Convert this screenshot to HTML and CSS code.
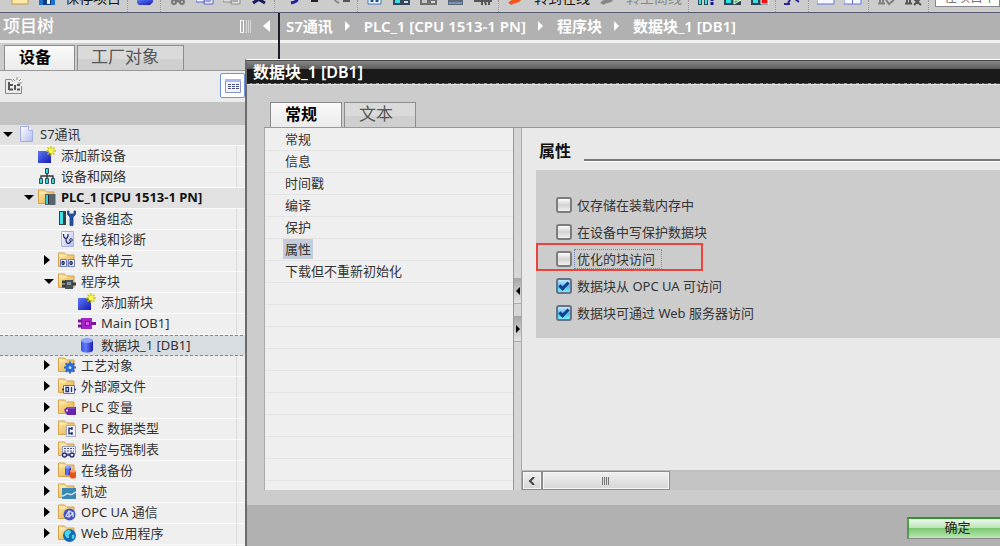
FILE: index.html
```html
<!DOCTYPE html>
<html lang="zh-CN">
<head>
  <meta charset="UTF-8">
  <meta name="viewport" content="width=device-width, initial-scale=1.0">
  <title>数据块_1 [DB1]</title>
  <link rel="stylesheet" href="styles.css">
</head>
<body>
  <!-- Shared icons -->
  <svg class="sprite" aria-hidden="true">
    <defs>
      <linearGradient id="gold" x1="0" y1="0" x2="1" y2="1"><stop offset="0" stop-color="#ffe9a6"/><stop offset="1" stop-color="#e3ad45"/></linearGradient>
      <linearGradient id="blue" x1="0" y1="0" x2="1" y2="1"><stop offset="0" stop-color="#5b7bf5"/><stop offset="1" stop-color="#1717b4"/></linearGradient>
      <linearGradient id="cyl" x1="0" y1="0" x2="1" y2="0"><stop offset="0" stop-color="#3f52e0"/><stop offset=".4" stop-color="#5f7cf8"/><stop offset="1" stop-color="#1c1cb0"/></linearGradient>
      <linearGradient id="page" x1="0" y1="0" x2="1" y2="1"><stop offset="0" stop-color="#fff"/><stop offset="1" stop-color="#b3bdf0"/></linearGradient>
    </defs>
    <symbol id="folder" viewBox="0 0 18 18"><path d="M.5 15.5V2h6l2 2H16v11.5z" fill="url(#gold)" stroke="#d3a24a"/><path d="M1.500 5h5l2-1" fill="none" stroke="#fff2c8"/></symbol>
    <symbol id="star" viewBox="0 0 10 10"><path d="M5 0v10M0 5h10M1.500 1.500l7 7M8.500 1.500l-7 7" stroke="#c9c800" stroke-width="1.400"/><circle cx="5" cy="5" r="2.300" fill="#ffff4a"/></symbol>
    <symbol id="file" viewBox="0 0 18 18"><path d="M3.500 1.500h8l4 4v11h-12z" fill="url(#page)" stroke="#a3ade0"/><path d="M11.500 1.500v4h4" fill="#fff" stroke="#a3ade0"/></symbol>
    <symbol id="add" viewBox="0 0 18 18"><path d="M0 5h13v12H0z" fill="url(#blue)"/><use href="#star" x="8" y="0" width="10" height="10"/></symbol>
    <symbol id="network" viewBox="0 0 18 18"><path d="M9 6v4M3 12v-3h12v3M9 9v3" fill="none" stroke="#333" stroke-width="1.400"/><g fill="#35d5df" stroke="#2d4e5d"><path d="M7.500 1.500h3v5h-3zM1.500 11.500h3v5h-3zM7.500 11.500h3v5h-3zM13.500 11.500h3v5h-3z"/></g></symbol>
    <symbol id="plc" viewBox="0 0 18 18"><use href="#folder"/><path d="M7 6h10.500v11H7z" fill="#56626c"/><path d="M8 7h2v9H8z" fill="#35d0dc"/><path d="M10.500 7v9" stroke="#202a33"/></symbol>
    <symbol id="config" viewBox="0 0 18 18"><path d="M1 2h7v14H1z" fill="#33414c"/><path d="M2 3h3v12H2z" fill="#3ce0e6"/><path d="M9.500 2v3.500L12 8v8.500h3V8l2.500-2.500V2h-1.500v3h-5V2z" fill="#24519f" stroke="#1c3f85" stroke-width=".8"/></symbol>
    <symbol id="diag" viewBox="0 0 18 18"><path d="M3.500 1.500h12v15h-12z" fill="url(#page)" stroke="#a9b1da"/><path d="M5.500 4c0 6 5 6 4.500 0M8 9c0 6 4 5 4.500 2" fill="none" stroke="#222b66" stroke-width="1.300"/><circle cx="13" cy="10" r="1.300" fill="#fff" stroke="#222b66"/></symbol>
    <symbol id="unit" viewBox="0 0 18 18"><use href="#folder"/><path d="M2.500 8.500h6v7h-6zM10.500 8.500h6v7h-6z" fill="#dfe4fa" stroke="#707cb8"/><path d="M4 12h3M12 12h3M4 10.500h2v3H4zM12 10.500h2v3h-2z" fill="none" stroke="#27315f"/></symbol>
    <symbol id="blocks" viewBox="0 0 18 18"><use href="#folder"/><path d="M7 8h8v9H7z" fill="#48525b"/><path d="M4 10h4M4 14h4M14 12h4" stroke="#333c44" stroke-width="3"/><path d="M9 10h4v3H9z" fill="#8a949c"/></symbol>
    <symbol id="ob" viewBox="0 0 18 18"><path d="M3 4h11v11H3z" fill="#a323c5"/><path d="M0 7h4M0 12h4M13 9.500h5" stroke="#7a1599" stroke-width="3"/><path d="M7.500 7.500h4v4h-4z" fill="#e25cf5" stroke="#6b0d8a"/></symbol>
    <symbol id="db" viewBox="0 0 18 18"><path d="M3 4v10c0 3.500 12 3.500 12 0V4z" fill="url(#cyl)"/><ellipse cx="9" cy="4.500" rx="6" ry="2.500" fill="#8ea2fb"/></symbol>
    <symbol id="tech" viewBox="0 0 18 18"><use href="#folder"/><circle cx="12" cy="11.500" r="3" fill="#b8d8f8" stroke="#2b6bd0" stroke-width="3"/><path d="M12 5.500v2M12 15.500v2M6 11.500h2M16 11.500h2M7.700 7.200l1.500 1.500M14.800 14.300l1.500 1.500M16.300 7.200l-1.500 1.500M7.700 15.800l1.500-1.500" stroke="#2b6bd0" stroke-width="2"/></symbol>
    <symbol id="source" viewBox="0 0 18 18"><use href="#folder"/><path d="M5.500 8.500h11v8h-11z" fill="#eef0fb" stroke="#6a72a5"/><path d="M8 10.500h2.500v4H8zM13.500 10v5M4 12.500h2M16 12.500h2" fill="none" stroke="#26306a" stroke-width="1.300"/></symbol>
    <symbol id="tags" viewBox="0 0 18 18"><use href="#folder"/><path d="M6 12l3-3h9v8H9z" fill="#6526ac"/><path d="M9 10h8" stroke="#a071dd"/><circle cx="9" cy="12.500" r="1" fill="#fff"/></symbol>
    <symbol id="types" viewBox="0 0 18 18"><use href="#folder"/><path d="M8.500 6.500h9v11h-9z" fill="#f2f3fc" stroke="#a3a9cc"/><path d="M11 8.500v7M11 9.500h3M11 14.500h3M14 8v3M14 13v3" stroke="#26306a" stroke-width="1.400"/></symbol>
    <symbol id="watch" viewBox="0 0 18 18"><use href="#folder"/><path d="M4.500 6.500h13v7h-13z" fill="#e9ebfa" stroke="#98a0c8"/><path d="M6 8.500h10M6 11h10" stroke="#4c5588" stroke-dasharray="2 1"/><g fill="#dfe4fa" stroke="#283078" stroke-width="1.300"><circle cx="6.500" cy="15" r="2"/><circle cx="14" cy="15" r="2"/><path d="M8.500 15h3.500"/></g></symbol>
    <symbol id="backup" viewBox="0 0 18 18"><use href="#folder"/><path d="M7 6v7c0 2 6 2 6 0V6z" fill="url(#cyl)"/><ellipse cx="10" cy="6" rx="3" ry="1.500" fill="#8da0fb"/><path d="M12 10v6c0 2 6 2 6 0v-6z" fill="#e4541a"/><ellipse cx="15" cy="10" rx="3" ry="1.500" fill="#ff9c68"/></symbol>
    <symbol id="trace" viewBox="0 0 18 18"><use href="#folder"/><path d="M4 6h14v11H4z" fill="#3a87b5"/><path d="M4 14c4 0 4-4 7-2s4-1 7-2" fill="none" stroke="#d6efff" stroke-width="1.300"/></symbol>
    <symbol id="opc" viewBox="0 0 18 18"><use href="#folder"/><circle cx="11.500" cy="11.500" r="6" fill="#4655c4"/><path d="M8 13l3-5 4 2-4 4zM11 8v6M15 10v4" fill="none" stroke="#dbe1ff" stroke-width="1.200"/></symbol>
    <symbol id="web" viewBox="0 0 18 18"><use href="#folder"/><circle cx="11.500" cy="11.500" r="6.500" fill="#1669b5"/><path d="M7 8c3-3 6-2 6 0s-3 2-2 4-2 3-3 1-2-3-1-5zM14 11c3-1 3 1 2 3s-3 1-2-3z" fill="#4cd5e4"/></symbol>
  </svg>

  <div class="app">
    <!-- Main toolbar -->
    <header class="toolbar">
      <div class="group">
        <button aria-label="打开"><svg viewBox="0 0 18 12"><path d="M1 -1h16v5H1z" fill="#ffe9a6" stroke="#c99a3c"/></svg></button>
        <button aria-label="保存"><svg viewBox="0 0 18 12"><path d="M1 0h16v5H1z" fill="#1d6fd0"/><path d="M5 0h8v5H5z" fill="#123b85"/><path d="M9 0h3v4H9z" fill="#e8f4ff"/></svg></button>
        <button class="caption">保存项目</button>
      </div>
      <div class="group">
        <button aria-label="打印"><svg viewBox="0 0 18 12"><path d="M1 0h16v2l-3 3H3L1 3z" fill="url(#blue)"/></svg></button>
      </div>
      <div class="group">
        <button aria-label="剪切"><svg viewBox="0 0 18 12" fill="none" stroke="#777" stroke-width="2"><path d="M10 0L7 2M7 0l4 2"/><circle cx="5" cy="2" r="2"/><circle cx="13" cy="2" r="2"/></svg></button>
        <button aria-label="复制"><svg viewBox="0 0 18 12"><path d="M0-1h9v3H0zM8-1h9v5H8z" fill="#eef0ff" stroke="#5867c5"/><path d="M10 1h5" stroke="#3d4cab"/></svg></button>
        <button aria-label="粘贴"><svg viewBox="0 0 18 12"><path d="M0-1h9v3H0zM8-1h9v5H8z" fill="#ddd" stroke="#8d8d8d"/><path d="M10 1h5" stroke="#777"/></svg></button>
        <button aria-label="删除"><svg viewBox="0 0 18 12"><path d="M9-1L3 3M8-1l7 4" stroke="#17175e" stroke-width="3"/></svg></button>
      </div>
      <div class="group">
        <button aria-label="撤销"><svg viewBox="0 0 18 12"><path d="M14 0c0 1-2 2-6 3" fill="none" stroke="#1f1f9c" stroke-width="3"/></svg></button>
        <button class="narrow" aria-label="撤销列表"><svg viewBox="0 0 14 12"><path d="M1 0h7v2H1z" fill="#222"/></svg></button>
        <button aria-label="重做"><svg viewBox="0 0 18 12"><path d="M2 0c0 1 2 2 4 3" fill="none" stroke="#888" stroke-width="2"/><path d="M10 0h7v2h-7z" fill="#555"/></svg></button>
      </div>
      <div class="group">
        <button aria-label="编译"><svg viewBox="0 0 18 12"><path d="M2-1h13v5H2z" fill="#eef6ff" stroke="#3f77bb"/><path d="M6 0v2M11 0v2" stroke="#204f8f" stroke-width="3"/></svg></button>
        <button aria-label="下载"><svg viewBox="0 0 18 12"><path d="M0 0h17v5H0z" fill="#35485a"/><path d="M2 0h5v3H2z" fill="#35e1e8"/><path d="M11 2h4" stroke="#cdd8e0" stroke-width="2"/></svg></button>
        <button aria-label="上传"><svg viewBox="0 0 18 12"><path d="M0 0h17v5H0z" fill="#6e6e6e"/><path d="M2 0h5v3H2z" fill="#c6c6c6"/><path d="M11 2h4" stroke="#ddd" stroke-width="2"/></svg></button>
        <button aria-label="仿真"><svg viewBox="0 0 18 12"><path d="M1 0h15v5H1z" fill="#59697a"/><path d="M2 3h13" stroke="#95bfe5"/></svg></button>
        <button aria-label="运行系统"><svg viewBox="0 0 18 12"><path d="M0 1h7M8 5V1h3l1 4M15 0v5M12 1h6" fill="none" stroke="#555" stroke-width="2"/></svg></button>
      </div>
      <div class="group">
        <button aria-label="在线"><svg viewBox="0 0 18 12"><path d="M12-1c0 3-7 1-9 5" fill="none" stroke="#f2561c" stroke-width="4"/></svg></button>
        <button class="caption">转到在线</button>
        <button aria-label="离线"><svg viewBox="0 0 18 12"><path d="M12-1c0 3-7 1-9 5" fill="none" stroke="#868686" stroke-width="4"/></svg></button>
        <button class="caption off">转至离线</button>
      </div>
      <div class="group">
        <button aria-label="在线和诊断"><svg viewBox="0 0 18 12"><path d="M3 0v5M9 0v5" stroke="#28505c" stroke-width="4"/><path d="M3 0v4M9 0v4" stroke="#39dfe3" stroke-width="2"/><path d="M15 0v1M15 2v3" stroke="#15159b" stroke-width="3"/></svg></button>
        <button aria-label="启动 CPU"><svg viewBox="0 0 18 12"><path d="M0 0h17v5H0z" fill="#304351"/><path d="M2 0h5v3H2z" fill="#35e1e8"/><path d="M10 0h7l-7 4z" fill="#28c738" stroke="#fff"/></svg></button>
        <button aria-label="停止 CPU"><svg viewBox="0 0 18 12"><path d="M0 0h17v5H0z" fill="#304351"/><path d="M2 0h5v3H2z" fill="#35e1e8"/><path d="M10-1h7v5h-7z" fill="#f31414" stroke="#fff"/></svg></button>
      </div>
      <div class="group">
        <button aria-label="交叉引用"><svg viewBox="0 0 18 12"><path d="M0 4h6M6 0L4 3M11-1l4 3" stroke="#27279a" stroke-width="2"/></svg></button>
      </div>
      <div class="group">
        <button aria-label="水平拆分"><svg viewBox="0 0 18 12"><path d="M0-1h17v5H0z" fill="#f6f7ff" stroke="#5d74d8"/></svg></button>
        <button aria-label="垂直拆分"><svg viewBox="0 0 18 12"><path d="M0-1h17v5H0zM8.500 0v4" fill="#f6f7ff" stroke="#5d74d8"/></svg></button>
      </div>
      <div class="group">
        <button aria-label="查找"><svg viewBox="0 0 18 12" fill="none" stroke="#808080"><path d="M1 3.500h7M3 0v3M6 0v3M9 0l3 4 5-4" stroke-width="2"/></svg></button>
        <button aria-label="清除"><svg viewBox="0 0 18 12" fill="none" stroke="#555"><path d="M1 3.500h7M3 0v3M6 0v3M10 5l6-6M10-1l7 6" stroke-width="2"/></svg></button>
      </div>
      <input class="search" type="text" placeholder="在项目中搜索" aria-label="搜索">
    </header>

    <div class="workspace">
      <!-- Project tree -->
      <aside class="project">
        <div class="bar">
          <h2>项目树</h2>
          <svg class="columns" viewBox="0 0 13 13" fill="none" stroke="#fff"><path d="M1.500.5h3v12h-3z"/><path d="M6.500.5h1v12h-1M9.500 0v13M11.500 0v13" opacity=".5"/></svg>
          <button class="collapse" aria-label="折叠"></button>
        </div>
        <div class="tabs">
          <button class="tab active">设备</button>
          <button class="tab">工厂对象</button>
        </div>
        <div class="tree-tools">
          <button aria-label="新建组"><svg width="20" height="20" viewBox="0 0 20 20" fill="none" stroke="#8a8a8a"><path d="M1.500 3.500h6l1 2M17.500 10v7.500h-16v-14"/><path d="M5 6v8M5 9h4M5 13.500h4M11 9v5M13 9h3M13 13.500h3" stroke="#555" stroke-width="2"/><path d="M13 1v3M9 3l2 2M17 3l-2 2M14 7h4"/></svg></button>
          <button class="details" aria-label="详细视图"><svg width="18" height="18" viewBox="0 0 18 18"><path d="M1.500 2.500h15v13h-15z" fill="#f4f6ff" stroke="#8793c8"/><path d="M1 2h16v3H1z" fill="#a9b8ee"/><path d="M4 7.500h11M4 9.500h11M4 11.500h11" stroke="#475182" stroke-dasharray="3 1"/></svg></button>
        </div>
        <div class="tree-head"></div>
        <ul class="tree">
          <li class="node group-row"><i class="twist open"></i><svg><use href="#file"/></svg>S7通讯</li>
          <li class="node l1"><i class="twist"></i><svg><use href="#add"/></svg>添加新设备</li>
          <li class="node l1"><i class="twist"></i><svg><use href="#network"/></svg>设备和网络</li>
          <li class="node l1 group-row strong"><i class="twist open"></i><svg><use href="#plc"/></svg>PLC_1 [CPU 1513-1 PN]</li>
          <li class="node l2"><i class="twist"></i><svg><use href="#config"/></svg>设备组态</li>
          <li class="node l2"><i class="twist"></i><svg><use href="#diag"/></svg>在线和诊断</li>
          <li class="node l2"><i class="twist closed"></i><svg><use href="#unit"/></svg>软件单元</li>
          <li class="node l2"><i class="twist open"></i><svg><use href="#blocks"/></svg>程序块</li>
          <li class="node l3"><i class="twist"></i><svg><use href="#add"/></svg>添加新块</li>
          <li class="node l3"><i class="twist"></i><svg><use href="#ob"/></svg>Main [OB1]</li>
          <li class="node l3 selected"><i class="twist"></i><svg><use href="#db"/></svg>数据块_1 [DB1]</li>
          <li class="node l2"><i class="twist closed"></i><svg><use href="#tech"/></svg>工艺对象</li>
          <li class="node l2"><i class="twist closed"></i><svg><use href="#source"/></svg>外部源文件</li>
          <li class="node l2"><i class="twist closed"></i><svg><use href="#tags"/></svg>PLC 变量</li>
          <li class="node l2"><i class="twist closed"></i><svg><use href="#types"/></svg>PLC 数据类型</li>
          <li class="node l2"><i class="twist closed"></i><svg><use href="#watch"/></svg>监控与强制表</li>
          <li class="node l2"><i class="twist closed"></i><svg><use href="#backup"/></svg>在线备份</li>
          <li class="node l2"><i class="twist closed"></i><svg><use href="#trace"/></svg>轨迹</li>
          <li class="node l2"><i class="twist closed"></i><svg><use href="#opc"/></svg>OPC UA 通信</li>
          <li class="node l2"><i class="twist closed"></i><svg><use href="#web"/></svg>Web 应用程序</li>
          <li class="node l2"></li>
        </ul>
      </aside>

      <main class="editor">
        <nav class="bar crumbs">
          <span>S7通讯</span>
          <span>PLC_1 [CPU 1513-1 PN]</span>
          <span>程序块</span>
          <span>数据块_1 [DB1]</span>
        </nav>
      </main>
    </div>

    <!-- Properties window -->
    <section class="dialog">
      <h1 class="dialog-title">数据块_1 [DB1]</h1>
      <div class="dialog-edge"></div>
      <div class="tabs">
        <button class="tab active">常规</button>
        <button class="tab">文本</button>
      </div>
      <div class="dialog-body">
        <ul class="sections">
          <li><button>常规</button></li>
          <li><button>信息</button></li>
          <li><button>时间戳</button></li>
          <li><button>编译</button></li>
          <li><button>保护</button></li>
          <li><button class="current">属性</button></li>
          <li><button>下载但不重新初始化</button></li>
        </ul>
        <div class="splitter">
          <button class="to-left" aria-label="向左折叠"></button>
          <button class="to-right" aria-label="向右折叠"></button>
        </div>
        <div class="page">
          <div class="page-content">
            <h2 class="page-title">属性</h2>
            <div class="options">
              <div class="option"><input type="checkbox" id="loadOnly"><label for="loadOnly">仅存储在装载内存中</label></div>
              <div class="option"><input type="checkbox" id="protect"><label for="protect">在设备中写保护数据块</label></div>
              <div class="option marked"><input type="checkbox" id="optimized"><label for="optimized">优化的块访问</label></div>
              <div class="option"><input type="checkbox" id="opcua" checked><label for="opcua">数据块从 OPC UA 可访问</label></div>
              <div class="option"><input type="checkbox" id="webserver" checked><label for="webserver">数据块可通过 Web 服务器访问</label></div>
            </div>
          </div>
          <div class="scrollbar">
            <button class="scroll-left" aria-label="向左滚动"><svg width="8" height="8" viewBox="0 0 8 8"><path d="M6 0L2 4l4 4" fill="none" stroke="#444" stroke-width="2"/></svg></button>
            <div class="thumb"><i class="grip"></i></div>
          </div>
        </div>
      </div>
      <footer class="dialog-footer">
        <button class="ok">确定</button>
      </footer>
    </section>
  </div>
</body>
</html>
```
FILE: styles.css
```css
/* Global Styles */
*, *::before, *::after {
  box-sizing: border-box;
}

body {
  margin: 0;
  font-family: "Noto Sans", "Noto Sans CJK SC", sans-serif;
  font-size: 13px;
  line-height: 20px;
  color: #333;
  background: #ccc;
}

h1, h2, ul {
  margin: 0;
  padding: 0;
  list-style: none;
}

button {
  margin: 0;
  padding: 0;
  border: none;
  background: none;
  color: inherit;
  font: inherit;
}

svg {
  display: block;
  flex: none;
}

.sprite {
  position: absolute;
  width: 0;
  height: 0;
}

.app {
  position: relative;
  display: flex;
  flex-direction: column;
  height: 100vh;
  overflow: hidden;
}

/* Toolbar */
.toolbar {
  display: flex;
  flex: none;
  height: 13px;
  padding-left: 3px;
  border-bottom: 1px solid #555a70;
  background: #ccc;
  overflow: hidden;
}

.group {
  display: flex;
  flex: none;
  align-items: flex-end;
  gap: 9px;
  height: 12px;
  padding: 0 6px 0 8px;
  border-right: 1px dotted #999;
}

.group svg {
  width: 18px;
  height: 12px;
}

.group .narrow svg {
  width: 14px;
}

.caption {
  height: 20px;
  margin-bottom: 4px;
  font-size: 14px;
  line-height: 20px;
  color: #111;
}

.caption.off {
  color: #888;
}

.search {
  flex: 1;
  align-self: flex-end;
  min-width: 0;
  height: 22px;
  margin: 0 0 5px 6px;
  padding: 0 8px;
  border: 1px solid #888;
  background: #fff;
  font: inherit;
}

/* Workspace */
.workspace {
  display: flex;
  flex: 1;
  min-height: 0;
}

.bar {
  display: flex;
  align-items: center;
  height: 30px;
  padding-bottom: 1px;
  border-bottom: 3px solid #f2f2f2;
  background: #b1b1b1;
  color: #fff;
  font-size: 15px;
  font-weight: 600;
}

.bar h2 {
  flex: 1;
  font-size: 17px;
  font-weight: 500;
}

.project {
  flex: none;
  width: 280px;
  border-right: 2px solid #1c1c2a;
}

.project .bar {
  padding-left: 3px;
}

.columns {
  width: 13px;
  height: 13px;
}

.collapse {
  margin: 0 8px 0 11px;
  border: 6px solid transparent;
  border-left: none;
  border-right: 7px solid #fff;
}

.crumbs {
  gap: 14px;
  padding-left: 6px;
}

.crumbs span {
  display: flex;
  align-items: center;
  gap: 12px;
}

.crumbs span:not(:last-child)::after {
  content: "";
  border: 5px solid transparent;
  border-left-color: #fff;
  border-right: none;
}

/* Tabs */
.tabs {
  display: flex;
  gap: 2px;
  padding: 2px 0 0 4px;
  border-bottom: 1px solid #999;
}

.tab {
  height: 25px;
  padding: 0 24px 2px 13px;
  border: 1px solid #8c8c8c;
  border-bottom: none;
  background: linear-gradient(#dadada 55%, #cfcfcf 56%);
  color: #555;
  font-size: 17px;
  line-height: 20px;
}

.tab.active {
  margin-bottom: -1px;
  padding: 0 23px 2px 14px;
  background: linear-gradient(#fafafa, #ebebeb);
  color: #000;
  font-size: 16px;
  font-weight: 700;
}

/* Project tree */
.tree-tools {
  display: flex;
  align-items: center;
  justify-content: space-between;
  height: 31px;
  padding: 0 33px 2px 4px;
  background: #ebebeb;
}

.details {
  display: grid;
  place-items: center;
  width: 25px;
  height: 25px;
  border: 1px solid #6d94dd;
  border-radius: 2px;
  background: #fff;
}

.tree-head {
  height: 23px;
  background: #c3c3c3;
}

.tree {
  background: linear-gradient(#dcdcdc, #dcdcdc) 236px 0 / 1px 100% no-repeat #efefef;
}

.node {
  display: flex;
  align-items: center;
  height: 21px;
  padding-bottom: 2px;
  border-bottom: 1px solid #fafafa;
  white-space: nowrap;
}

.node svg {
  width: 18px;
  height: 18px;
  margin-right: 5px;
}

.l1 {
  padding-left: 21px;
}

.l2 {
  padding-left: 41px;
}

.l3 {
  padding-left: 61px;
}

.group-row {
  background: #e1e1e1;
}

.strong {
  color: #111;
  font-weight: 700;
}

.selected {
  border-top: 1px dashed #888;
  border-bottom: 1px dashed #888;
  background: #d8dde1;
}

.twist {
  display: grid;
  flex: none;
  width: 17px;
  padding-left: 3px;
}

.twist::before {
  width: 0;
  border: 0 solid transparent;
}

.open::before {
  content: "";
  border-width: 5px 5px 0;
  border-top-color: #000;
}

.closed::before {
  content: "";
  border-width: 5px 0 5px 6px;
  border-left-color: #000;
}

.editor {
  flex: 1;
  min-width: 0;
}

/* Properties window */
.dialog {
  position: absolute;
  top: 59px;
  right: 0;
  bottom: 0;
  left: 245px;
  display: flex;
  flex-direction: column;
  border-top: 1px solid #fff;
  border-left: 2px solid #6b6b6b;
  background: #ccc;
}

.dialog-title {
  height: 23px;
  padding-left: 6px;
  border-top: 1px solid #444;
  background: linear-gradient(#888, #5c5c5c 8px, #1a1a1a 8px);
  color: #fff;
  font-size: 16px;
  font-weight: 600;
  line-height: 22px;
}

.dialog-edge {
  height: 2px;
  border-bottom: 1px solid #e4e4e4;
  background: repeating-linear-gradient(90deg, #333 0 3px, #888 3px 5px, #444 5px 9px, #999 9px 12px);
}

.dialog .tabs {
  margin: 17px 0 0 17px;
  padding: 0 0 0 6px;
}

.dialog .tab {
  padding: 0 22px 2px 14px;
}

.dialog .tab.active {
  padding: 0 24px 2px 14px;
}

.dialog-body {
  display: flex;
  flex: 1;
  min-height: 0;
  margin: 0 0 15px 17px;
  border-left: 1px solid #aaa;
}

.sections {
  width: 248px;
  padding-top: 1px;
  background: repeating-linear-gradient(#efefef 0 22px, #e4e4e4 22px 23px, #efefef 23px 44px, #e4e4e4 44px 45px, #efefef 45px 66px);
  background: repeating-linear-gradient(#efefef 0 21px, #e4e4e4 21px 22px) 0 1px;
}

.sections li {
  height: 22px;
  padding-left: 18px;
}

.sections button {
  height: 20px;
  padding: 0 2px;
}

.sections .current {
  background: #c3ccd8;
}

.splitter {
  display: flex;
  flex-direction: column;
  gap: 12px;
  width: 9px;
  padding-top: 150px;
  border-left: 1px solid #999;
  border-right: 1px solid #aaa;
  background: #d6d6d6;
}

.splitter button {
  display: grid;
  place-items: center;
  width: 7px;
  height: 26px;
  border-bottom: 1px solid #aaa;
  background: linear-gradient(#a5a5a5, #e4e4e4);
}

.splitter button::before {
  content: "";
  border: 4px solid transparent;
}

.splitter .to-left::before {
  border-left: none;
  border-right-color: #000;
}

.splitter .to-right::before {
  border-right: none;
  border-left-color: #000;
}

.page {
  display: flex;
  flex: 1;
  flex-direction: column;
  min-width: 0;
  background: #e9e9e9;
}

.page-content {
  flex: 1;
  padding: 12px 0 0 14px;
}

.page-title {
  display: flex;
  align-items: center;
  gap: 13px;
  height: 22px;
  padding-left: 3px;
  color: #111;
  font-size: 16px;
  font-weight: 700;
}

.page-title::after {
  content: "";
  flex: 1;
  align-self: flex-end;
  height: 3px;
  border-top: 2px solid #777;
  border-bottom: 1px solid #fff;
}

.options {
  margin-top: 8px;
  padding: 21px 0 12px;
  background: #ccc;
}

.option {
  position: relative;
  display: flex;
  align-items: center;
  height: 27px;
  padding-left: 20px;
}

.option input {
  appearance: none;
  width: 16px;
  height: 16px;
  margin: 0 3px 0 0;
  border: 2px solid #7d7d7d;
  border-radius: 3px;
  background: linear-gradient(#fff, #d2d2d2 50%, #f2f2f2);
}

.option input:checked {
  border-color: #66728a;
  background: linear-gradient(#c9e6fa, #49bde8 55%, #7df0fb);
}

.option input:checked::before {
  content: "";
  display: block;
  width: 10px;
  height: 6px;
  margin: 2px 1px;
  border: solid #12408f;
  border-width: 0 0 3px 3px;
  transform: rotate(-45deg);
}

.option label {
  padding: 0 2px;
  line-height: 18px;
}

.marked label {
  padding-right: 6px;
  outline: 1px dotted #7a85ad;
}

/* Red highlight around the row */
.marked::after {
  content: "";
  position: absolute;
  top: -2px;
  left: 0;
  width: 167px;
  height: 28px;
  border: 2px solid #e8453c;
}

/* Scrollbar */
.scrollbar {
  display: flex;
  height: 20px;
  border-top: 1px solid #bbb;
  background: #c3c3c3;
}

.scroll-left, .thumb {
  display: grid;
  place-items: center;
  height: 19px;
  border: 1px solid #8c8c8c;
  background: linear-gradient(#f0f0f0, #d6d6d6);
  box-shadow: inset 0 0 0 1px #f5f5f5;
}

.scroll-left {
  width: 20px;
}

.thumb {
  width: 128px;
}

.grip {
  width: 8px;
  height: 8px;
  background: repeating-linear-gradient(90deg, #777 0 1px, #ddd 1px 2px);
}

/* Footer */
.dialog-footer {
  display: flex;
  flex: none;
  justify-content: flex-end;
  height: 41px;
  padding-top: 12px;
  background: #b1b1b1;
}

.ok {
  width: 93px;
  height: 22px;
  padding: 0 0 3px 6px;
  border-top: 2px solid #2f942b;
  border-left: 2px solid #4f9c4b;
  border-bottom: 1px solid #8a8a8a;
  background: linear-gradient(#eefaec, #bde3b8 45%, #7cc873 50%, #b9e9b1);
  color: #222;
  line-height: 16px;
}
```
